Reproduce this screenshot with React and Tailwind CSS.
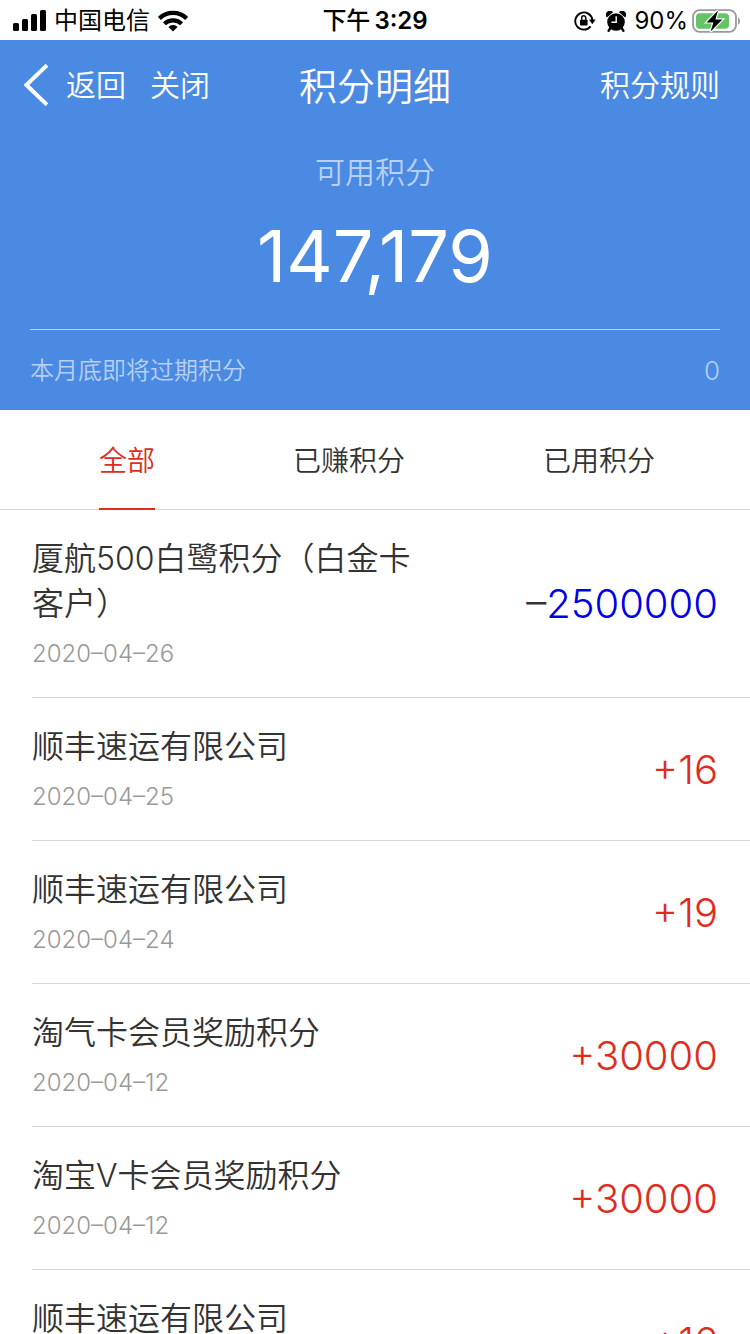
const records = [
  { title: '厦航500白鹭积分（白金卡客户）', date: '2020–04–26', sign: '–', amount: '2500000' },
  { title: '顺丰速运有限公司', date: '2020–04–25', sign: '+', amount: '16' },
  { title: '顺丰速运有限公司', date: '2020–04–24', sign: '+', amount: '19' },
  { title: '淘气卡会员奖励积分', date: '2020–04–12', sign: '+', amount: '30000' },
  { title: '淘宝V卡会员奖励积分', date: '2020–04–12', sign: '+', amount: '30000' },
  { title: '顺丰速运有限公司', date: '2020–04–11', sign: '+', amount: '16' },
];

const tabs = ['全部', '已赚积分', '已用积分'];

function SignalIcon() {
  return (
    <svg width="34" height="22" viewBox="0 0 34 22" aria-hidden="true">
      <rect x="1" y="13" width="6" height="8" rx="1.5" />
      <rect x="10" y="9" width="6" height="12" rx="1.5" />
      <rect x="19" y="4" width="6" height="17" rx="1.5" />
      <rect x="28" y="0" width="6" height="21" rx="1.5" />
    </svg>
  );
}

function WifiIcon() {
  return (
    <svg width="30" height="22" viewBox="0 0 30 22" aria-hidden="true">
      <path d="M1.4 8.4a19.6 19.6 0 0 1 27.2 0" fill="none" stroke="#000" strokeWidth="4.4" />
      <path d="M6.4 13.8a12.4 12.4 0 0 1 17.2 0" fill="none" stroke="#000" strokeWidth="4.2" />
      <path d="M15 21.5l-4.6-4.6a6.6 6.6 0 0 1 9.2 0z" />
    </svg>
  );
}

function RotationLockIcon() {
  return (
    <svg width="22" height="20" viewBox="0 0 22 20" aria-hidden="true">
      <path d="M16.6 15.4A8.6 8.6 0 1 1 18.4 9" fill="none" stroke="#000" strokeWidth="1.9" />
      <path d="M15 8.6h6.6l-3.3 4.6z" />
      <rect x="6" y="8.8" width="7.6" height="5.6" rx="0.8" />
      <path d="M7.7 9V6.9a2.1 2.1 0 0 1 4.2 0V9" fill="none" stroke="#000" strokeWidth="1.4" />
    </svg>
  );
}

function AlarmIcon() {
  return (
    <svg width="20" height="21" viewBox="0 0 20 21" aria-hidden="true">
      <circle cx="10" cy="11" r="8.8" />
      <path d="M.8 6.4A3.7 3.7 0 0 1 7 1.2zM19.2 6.4A3.7 3.7 0 0 0 13 1.2z" />
      <path d="M4.4 17l-1.8 2.8M15.6 17l1.8 2.8" stroke="#000" strokeWidth="2.4" strokeLinecap="round" />
      <path d="M10.2 5.2v6H5.4" fill="none" stroke="#fff" strokeWidth="1.4" />
    </svg>
  );
}

function BatteryIcon() {
  return (
    <svg width="50" height="24" viewBox="0 0 50 24" aria-hidden="true">
      <rect x="1" y="1.2" width="43" height="21.6" rx="6.5" fill="none" stroke="#999" strokeWidth="1.8" />
      <path d="M46 8.2c2.6.8 2.6 6.8 0 7.6z" fill="#999" />
      <rect x="4" y="4.2" width="33" height="15.6" rx="3.8" fill="#65c466" />
      <path
        d="M26 1.6L14.6 13.4h6.8l-2.8 9.2L30.4 10.4h-7z"
        stroke="#fff"
        strokeWidth="2.4"
        paintOrder="stroke"
      />
    </svg>
  );
}

function StatusBar() {
  return (
    <div className="grid h-10 grid-cols-[1fr_auto_1fr] items-center bg-white px-2.5 pt-0.5 text-2xl font-normal text-black">
      <div className="flex items-center gap-2 pl-0.5">
        <SignalIcon />
        <span>中国电信</span>
        <WifiIcon />
      </div>
      <div className="flex items-center gap-1 font-medium">
        <span>下午</span>
        <span className="font-semibold">3:29</span>
      </div>
      <div className="flex items-center justify-end">
        <RotationLockIcon />
        <span className="ml-2.5">
          <AlarmIcon />
        </span>
        <span className="ml-2">90%</span>
        <span className="-mr-0.5 ml-1">
          <BatteryIcon />
        </span>
      </div>
    </div>
  );
}

function Header() {
  return (
    <header className="bg-[#4a8ae2] text-white">
      <nav className="grid h-[90px] grid-cols-[1fr_auto_1fr] items-center px-6 text-[30px]">
        <div className="flex items-center gap-6">
          <button type="button" className="flex items-center gap-[18px]">
            <svg width="24" height="42" viewBox="0 0 24 42" aria-hidden="true">
              <path d="M23 1.2L2.4 21 23 40.8" fill="none" stroke="#fff" strokeWidth="4" />
            </svg>
            返回
          </button>
          <button type="button">关闭</button>
        </div>
        <h1 className="pt-0.5 text-[38px]">积分明细</h1>
        <a href="#rules" className="mr-1.5 justify-self-end">
          积分规则
        </a>
      </nav>

      <div className="mx-[30px] flex flex-col items-center border-b border-[#b7d0f3] pb-8">
        <p className="pt-5 text-[30px] leading-[44px] text-[#b7d0f3]">可用积分</p>
        <p className="pt-5 text-[72px] leading-[83px] font-normal">147,179</p>
      </div>
      <div className="mx-[30px] flex h-20 items-center justify-between pt-0.5 text-2xl text-[#b7d0f3]">
        <span>本月底即将过期积分</span>
        <span className="text-[26px]">0</span>
      </div>
    </header>
  );
}

function Tabs() {
  return (
    <div role="tablist" className="flex h-[100px] justify-between border-b border-[#d6d6d6] pr-[95px] pl-[99px] text-[28px]">
      {tabs.map((tab, i) => (
        <button
          key={tab}
          type="button"
          role="tab"
          aria-selected={i === 0}
          className={
            i === 0
              ? '-mb-px border-b-2 border-[#de2d20] pt-1 text-[#de2d20]'
              : '-mb-px border-b-2 border-transparent pt-1 text-[#333]'
          }
        >
          {tab}
        </button>
      ))}
    </div>
  );
}

function RecordRow({ title, date, sign, amount }) {
  const spent = sign === '–';
  return (
    <li className="flex items-center justify-between border-b border-[#d6d6d6] pt-[26px] pr-8 pb-[25px]">
      <div className="w-[58%]">
        <h2 className="text-[32px] leading-[45px] text-[#333]">{title}</h2>
        <p className="mt-2.5 text-2xl leading-9 text-[#999]">{date}</p>
      </div>
      <p className="text-[40px] leading-[48px] text-[#de2d20]">
        <span className={spent ? 'text-[#333]' : ''}>{sign}</span>
        <span className={spent ? 'text-[#0000e6]' : ''}>{amount}</span>
      </p>
    </li>
  );
}

export default function App() {
  return (
    <div className="h-screen overflow-hidden bg-white font-['Inter','Noto_Sans_CJK_SC',sans-serif] font-[350]">
      <StatusBar />
      <Header />
      <Tabs />
      <ul className="pl-8">
        {records.map((record, i) => (
          <RecordRow key={i} {...record} />
        ))}
      </ul>
    </div>
  );
}
